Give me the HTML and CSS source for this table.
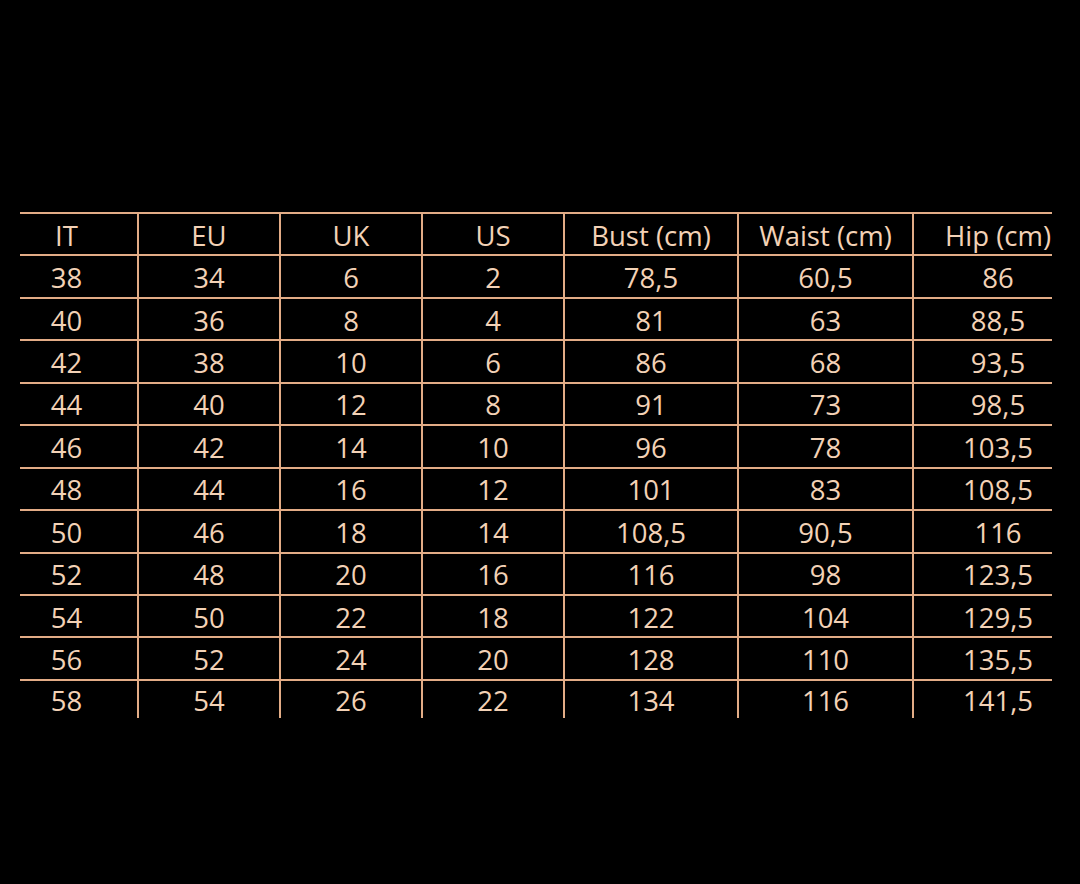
FILE: index.html
```html
<!DOCTYPE html>
<html>
<head>
<meta charset="utf-8">
<link rel="stylesheet" href="styles.css">
</head>
<body>
<div class="page">
<table class="sizes">
<colgroup>
<col class="c-it"><col class="c-mid"><col class="c-mid"><col class="c-mid"><col class="c-bust"><col class="c-waist"><col class="c-hip">
</colgroup>
<thead>
<tr><th>IT</th><th>EU</th><th>UK</th><th>US</th><th>Bust (cm)</th><th>Waist (cm)</th><th>Hip (cm)</th></tr>
</thead>
<tbody>
<tr><td>38</td><td>34</td><td>6</td><td>2</td><td>78,5</td><td>60,5</td><td>86</td></tr>
<tr><td>40</td><td>36</td><td>8</td><td>4</td><td>81</td><td>63</td><td>88,5</td></tr>
<tr><td>42</td><td>38</td><td>10</td><td>6</td><td>86</td><td>68</td><td>93,5</td></tr>
<tr><td>44</td><td>40</td><td>12</td><td>8</td><td>91</td><td>73</td><td>98,5</td></tr>
<tr><td>46</td><td>42</td><td>14</td><td>10</td><td>96</td><td>78</td><td>103,5</td></tr>
<tr><td>48</td><td>44</td><td>16</td><td>12</td><td>101</td><td>83</td><td>108,5</td></tr>
<tr><td>50</td><td>46</td><td>18</td><td>14</td><td>108,5</td><td>90,5</td><td>116</td></tr>
<tr><td>52</td><td>48</td><td>20</td><td>16</td><td>116</td><td>98</td><td>123,5</td></tr>
<tr><td>54</td><td>50</td><td>22</td><td>18</td><td>122</td><td>104</td><td>129,5</td></tr>
<tr><td>56</td><td>52</td><td>24</td><td>20</td><td>128</td><td>110</td><td>135,5</td></tr>
<tr class="last"><td>58</td><td>54</td><td>26</td><td>22</td><td>134</td><td>116</td><td>141,5</td></tr>
</tbody>
</table>
</div>
</body>
</html>
```

FILE: styles.css
```css
html, body {
  margin: 0;
  padding: 0;
  background: #000;
}

.page {
  width: 1080px;
  height: 884px;
  padding: 212px 0 0 20px;
  box-sizing: border-box;
  background: #000;
}

.sizes {
  border-collapse: collapse;
  table-layout: fixed;
  width: 1032px;
  font-family: "Open Sans", "Liberation Sans", sans-serif;
  font-size: 27.5px;
  color: #f3d2b6;
}

.c-it { width: 118px; }
.c-mid { width: 142px; }
.c-bust { width: 174px; }
.c-waist { width: 175px; }
.c-hip { width: 139px; }

.sizes th,
.sizes td {
  font-weight: 400;
  text-align: center;
  padding: 3px 0 0 0;
  height: 42.45px;
  box-sizing: border-box;
  line-height: 34px;
  border-left: 2px solid #e2ac86;
  border-bottom: 2px solid #e2ac86;
  white-space: nowrap;
}

.sizes thead th {
  border-top: 2px solid #e2ac86;
}

.sizes th:first-child,
.sizes td:first-child {
  border-left: none;
  padding-right: 24px;
}

.sizes th:last-child,
.sizes td:last-child {
  padding-left: 30px;
}

.sizes tr.last td {
  border-bottom: none;
  height: 38px;
}
```
